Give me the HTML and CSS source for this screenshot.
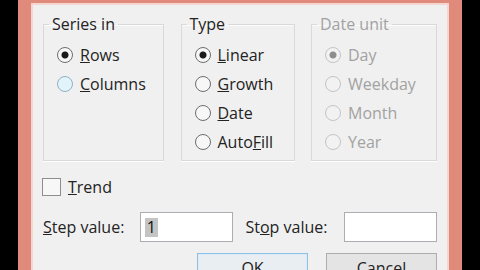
FILE: index.html
```html
<!DOCTYPE html>
<html lang="en">
<head>
    <meta charset="UTF-8">
    <meta name="viewport" content="width=device-width, initial-scale=1.0">
    <title>Series</title>
    <link rel="stylesheet" href="styles.css">
</head>
<body>
    <div class="frame">
        <div class="dialog">
            <div class="groups">
                <fieldset class="group group-series">
                    <legend>Series in</legend>
                    <label class="option"><input type="radio" name="series" checked><span><u>R</u>ows</span></label>
                    <label class="option hover"><input type="radio" name="series"><span><u>C</u>olumns</span></label>
                </fieldset>

                <fieldset class="group group-type">
                    <legend>Type</legend>
                    <label class="option"><input type="radio" name="type" checked><span><u>L</u>inear</span></label>
                    <label class="option"><input type="radio" name="type"><span><u>G</u>rowth</span></label>
                    <label class="option"><input type="radio" name="type"><span><u>D</u>ate</span></label>
                    <label class="option"><input type="radio" name="type"><span>Auto<u>F</u>ill</span></label>
                </fieldset>

                <fieldset class="group group-date" disabled>
                    <legend>Date unit</legend>
                    <label class="option"><input type="radio" name="unit" checked><span>Day</span></label>
                    <label class="option"><input type="radio" name="unit"><span>Weekday</span></label>
                    <label class="option"><input type="radio" name="unit"><span>Month</span></label>
                    <label class="option"><input type="radio" name="unit"><span>Year</span></label>
                </fieldset>
            </div>

            <label class="check"><input type="checkbox"><span><u>T</u>rend</span></label>

            <div class="values">
                <span class="value-label step-label"><u>S</u>tep value:</span>
                <div class="field"><span class="sel">1</span></div>
                <span class="value-label stop-label">St<u>o</u>p value:</span>
                <div class="field"></div>
            </div>

            <div class="buttons">
                <button class="btn btn-default">OK</button>
                <button class="btn">Cancel</button>
            </div>
        </div>
    </div>
</body>
</html>
```

FILE: styles.css
```css
body {
    margin: 0;
    height: 270px;
    overflow: hidden;
    background-color: #000000;
    font-family: 'Open Sans', 'Noto Sans', sans-serif;
    font-size: 16px;
    color: #232323;
}

.frame {
    margin-left: 18px;
    width: 444px;
    height: 270px;
    box-sizing: border-box;
    padding: 3px 13px 0;
    background: #df8a7b;
}

.dialog {
    height: 100%;
    box-sizing: border-box;
    border: 2px solid #f4d6ce;
    border-bottom: none;
    background: #f0f0f0;
    padding: 8px 10px 0;
}

.groups {
    display: flex;
    justify-content: space-between;
}

.group {
    margin: 0;
    min-width: 0;
    height: 148px;
    box-sizing: border-box;
    padding: 5px 0 0 13px;
    border: 1px solid #d9d9d9;
    box-shadow: 0 1px 0 #ffffff, inset 0 1px 0 #fbfbfb;
}

.group-series { width: 121px; }
.group-type { width: 114px; }
.group-date { width: 126px; }

legend {
    margin-left: -8px;
    padding: 0 3px;
    line-height: 22px;
}

.option {
    display: flex;
    align-items: center;
    gap: 7px;
    height: 29px;
}

input[type="radio"] {
    appearance: none;
    -webkit-appearance: none;
    margin: 0;
    width: 16px;
    height: 16px;
    box-sizing: border-box;
    border: 1px solid #6e6e6e;
    border-radius: 50%;
    background: #f7f7f7;
}

input[type="radio"]:checked {
    background: radial-gradient(circle, #1b1b1b 0 3px, #f7f7f7 4px);
}

.hover input[type="radio"] {
    border-color: #8fb3c4;
    background: #e0f4fa;
}

.group-date {
    color: #a2a2a2;
}

.group-date input[type="radio"] {
    border-color: #c4c4c4;
    background: #f2f2f2;
}

.group-date input[type="radio"]:checked {
    background: radial-gradient(circle, #8e8e8e 0 3px, #f2f2f2 4px);
}

.check {
    display: flex;
    align-items: center;
    gap: 7px;
    width: max-content;
    height: 20px;
    margin: 16px 0 0 -1px;
}

input[type="checkbox"] {
    appearance: none;
    -webkit-appearance: none;
    margin: 0;
    width: 19px;
    height: 18px;
    box-sizing: border-box;
    border: 1px solid #8e8e8e;
    background: #f7f7f7;
}

.values {
    display: flex;
    align-items: center;
    margin-top: 15px;
}

.step-label { width: 97px; }

.stop-label {
    width: 99px;
    margin-left: 13px;
}

.field {
    width: 93px;
    height: 30px;
    box-sizing: border-box;
    display: flex;
    align-items: center;
    padding-left: 4px;
    border: 1px solid #abadb3;
    background: #ffffff;
}

.sel {
    padding: 0 2px;
    line-height: 19px;
    background: #c4c4c4;
    color: #111111;
}

.buttons {
    display: flex;
    justify-content: flex-end;
    gap: 18px;
    margin-top: 11px;
}

.btn {
    width: 111px;
    height: 30px;
    padding: 0;
    border: 1px solid #adadad;
    background: #e4e4e4;
    font: inherit;
    color: inherit;
}

.btn-default {
    border-color: #8ec0e6;
    background: #e9eef2;
    box-shadow: inset 0 0 0 1px #d9ecf8;
}
```
